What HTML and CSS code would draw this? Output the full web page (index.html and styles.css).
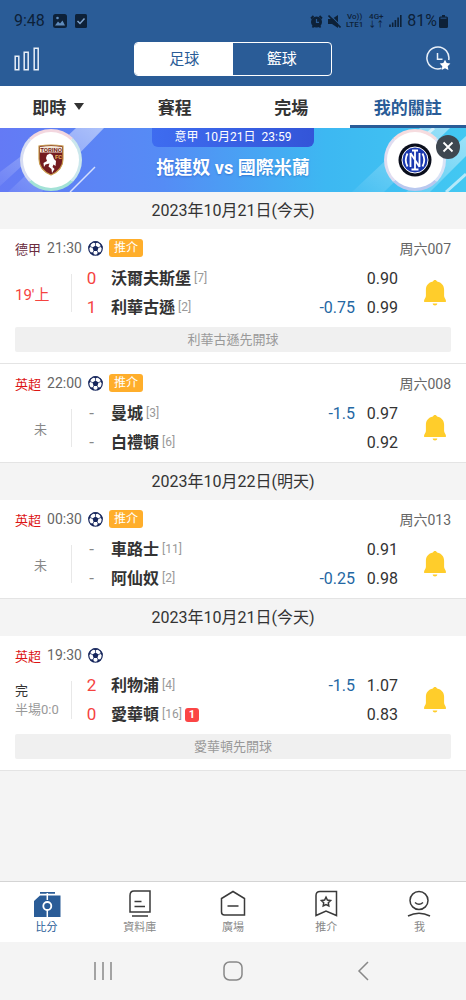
FILE: index.html
```html
<!DOCTYPE html>
<html lang="zh-Hant">
<head>
  <meta charset="UTF-8">
  <meta name="viewport" content="width=device-width, initial-scale=1">
  <title>我的關註</title>
  <link rel="stylesheet" href="styles.css">
</head>
<body>
  <!-- shared icons -->
  <svg class="defs" aria-hidden="true">
    <symbol id="ball" viewBox="0 0 16 16">
      <circle cx="8" cy="8" r="7.2" fill="#fff" stroke="#16265c" stroke-width="1.3"/>
      <path fill="#16265c" d="M8 4.700l3.200 2.300-1.200 3.700H6L4.800 7zM4.700.9L8 2.700 11.300.9 9.600.2H6.400zM.5 8.100l2.300-2.100-.5-3.300L.7 5.600zM15.500 8.100l-2.300-2.100.5-3.300 1.600 2.900zM2.200 12.300l3.500-.3.700 3.300-1.800-.3zM13.800 12.300l-3.500-.3-.7 3.300 1.800-.3z"/>
      <path stroke="#16265c" stroke-width=".8" d="M8 5V2.300M10.900 7.100l2.600-1.100M9.800 10.500l.9 1.800M6.200 10.500l-.9 1.800M5.100 7.100L2.500 6"/>
    </symbol>
    <symbol id="bell" viewBox="0 0 22 26">
      <path fill="#ffcd2b" d="M11 0c1 0 1.700.6 2.100 1.500 4.500 1 7 4 7 8.200v6.300c0 1.700 1.900 3.200 1.900 4.900 0 .8-.5 1.200-1.200 1.200H1.200C.5 22.100 0 21.700 0 20.900c0-1.700 1.900-3.200 1.900-4.900V9.700c0-4.200 2.500-7.200 7-8.200C9.300.6 10 0 11 0zM8.700 23.600h4.600c0 1.200-1 1.900-2.300 1.900s-2.300-.7-2.300-1.900z"/>
    </symbol>
  </svg>

  <header class="top">
    <div class="status-bar">
      <span class="clock">9:48</span>
      <svg width="14" height="14" viewBox="0 0 14 14"><rect width="14" height="14" rx="2.500" fill="#0d2138"/><path fill="#5f8cbd" d="M2 11.500l3-4 2 2 2.500-3L12 11.500z"/><circle cx="4.500" cy="4" r="1.300" fill="#5f8cbd"/></svg>
      <svg class="check" width="12" height="14" viewBox="0 0 12 14"><rect width="12" height="14" rx="1.500" fill="#0d2138"/><path d="M2.500 7l2.500 2.500L9.500 4.500" fill="none" stroke="#7fa3cc" stroke-width="1.500"/></svg>
      <div class="signals">
        <svg width="13" height="13" viewBox="0 0 13 13"><circle cx="6.500" cy="7" r="5.500" fill="#0d2138"/><path d="M1 3.500L3.500 1M12 3.500L9.500 1M2.500 12.500l1.500-2M10.500 12.500l-1.500-2" stroke="#0d2138" stroke-width="1.800"/><path d="M6.500 4v3.300H9" fill="none" stroke="#2a5c97" stroke-width="1.200"/></svg>
        <svg class="mute" width="13" height="13" viewBox="0 0 13 13"><path fill="#0d2138" d="M0 4h4l6-4v13L4 9H0z"/><path d="M1 -1l13 13" stroke="#2a5c97" stroke-width="1.200"/><path d="M.5 .5L12.500 12.500" stroke="#0d2138" stroke-width="1.600"/></svg>
        <span class="tiny">Vo))<br>LTE1</span>
        <span class="tiny">4G+<br>↓↑</span>
        <svg width="13" height="12" viewBox="0 0 13 12"><path stroke="#0d2138" stroke-width="1.600" d="M1 12V9.500M3.700 12V7.500M6.400 12V5M9.100 12V2.500M11.800 12V0"/></svg>
        <span class="clock">81%</span>
        <svg width="9" height="13" viewBox="0 0 9 13"><path fill="#0d2138" d="M3 0h3v1.500h1.500Q9 1.500 9 3v8.500Q9 13 7.500 13h-6Q0 13 0 11.500V3q0-1.500 1.500-1.500H3z"/><path fill="#2a5c97" d="M1.500 2.500h6v1.500h-6z" opacity=".6"/></svg>
      </div>
    </div>
    <div class="app-bar">
      <button class="icon-btn" aria-label="統計">
        <svg width="26" height="24" viewBox="0 0 26 24" fill="none" stroke="#e8eff8" stroke-width="1.500"><path d="M1.200 9.200h3.600v13.600H1.200zM10.200 5.200h4v17.600h-4zM20.200 1.200h4v21.600h-4z"/></svg>
      </button>
      <div class="segment">
        <button class="on">足球</button>
        <button>籃球</button>
      </div>
      <button class="icon-btn" aria-label="歷史">
        <svg width="26" height="26" viewBox="0 0 26 26" fill="none"><path d="M15.500 22.300A11 11 0 1 1 22.700 14" stroke="#e8eff8" stroke-width="1.500"/><path d="M11.500 7v6.300h5" stroke="#e8eff8" stroke-width="1.500"/><path fill="#fff" d="M19 13.800l1.700 3.300 3.700.5-2.700 2.600.7 3.700-3.400-1.700-3.300 1.700.6-3.700-2.600-2.600 3.600-.5z"/></svg>
      </button>
    </div>
  </header>

  <nav class="tabs">
    <a href="#">即時 <span class="caret"></span></a>
    <a href="#">賽程</a>
    <a href="#">完場</a>
    <a href="#" class="on">我的關註</a>
  </nav>

  <section class="banner">
    <svg class="streaks left" width="110" height="64" viewBox="0 0 110 64">
      <defs><linearGradient id="fade" x1="0" y1="1" x2="1" y2="0"><stop offset="0" stop-color="#fff" stop-opacity=".05"/><stop offset="1" stop-color="#fff" stop-opacity=".5"/></linearGradient></defs>
      <path fill="url(#fade)" d="M76 0h28L42 64H8zM0 44l24-18v10L0 58z"/>
      <path d="M95 39L70 64" stroke="#fff" stroke-opacity=".75" stroke-width="1.500"/>
    </svg>
    <svg class="streaks right" width="120" height="64" viewBox="0 0 120 64">
      <path fill="url(#fade)" d="M74 0h30L38 64H6zM120 8v20L84 64H60z"/>
      <path d="M120 46l-20 18M88 0L60 24" stroke="#fff" stroke-opacity=".6" stroke-width="3"/>
    </svg>
    <div class="crest home">
      <svg width="26" height="32" viewBox="0 0 26 32">
        <path fill="#741c20" stroke="#c79a4b" stroke-width="1.200" d="M1 2q12-2 24 0v13c0 8-5 13-12 16C6 28 1 23 1 15z"/>
        <path fill="#f5ead8" d="M2 3q11-2 22 0v5.500H2z"/>
        <text x="13" y="7.800" text-anchor="middle" class="crest-name">TORINO</text>
        <text x="20.500" y="14.500" text-anchor="middle" class="crest-fc">FC</text>
        <path fill="#fff" d="M9 11l3-1.500 2.500 1.500 1.500 4 2 2-.5 5-2-1.500-1 2.500 2 2-2.500 4-.5-4-3-2.500 1-3-4 1-1.500 2.500-.5-4 3.500-2-1-3z"/>
      </svg>
    </div>
    <div class="fixture">
      <p class="kickoff">意甲&nbsp; 10月21日&nbsp; 23:59</p>
      <p class="teams-title">拖連奴 vs 國際米蘭</p>
    </div>
    <div class="crest away">
      <svg width="34" height="34" viewBox="0 0 34 34">
        <circle cx="17" cy="17" r="16.500" fill="#0a0e1c"/><circle cx="17" cy="17" r="13" fill="#1a38b0" stroke="#fff" stroke-width="1"/>
        <path fill="none" stroke="#fff" stroke-width="1.800" d="M14 7.500h6M17 7.500v19M13.500 26.500h7M12.500 10v14M21.500 10v14M12.500 10l9 14M9.500 10.500q-3.500 6.500 0 13M24.500 10.500q3.500 6.500 0 13"/>
      </svg>
    </div>
    <button class="close" aria-label="關閉">
      <svg width="12" height="12" viewBox="0 0 12 12"><path d="M1.500 1.500l9 9M10.500 1.500l-9 9" stroke="#fff" stroke-width="1.800"/></svg>
    </button>
  </section>

  <main>
    <h2>2023年10月21日(今天)</h2>
    <article class="match">
      <div class="head"><span class="league bundesliga">德甲</span><time>21:30</time><svg class="ball"><use href="#ball"/></svg><span class="tag">推介</span><span class="code">周六007</span></div>
      <div class="body">
        <div class="state live">19'上</div>
        <div class="sides">
          <div class="side"><b class="score">0</b><strong>沃爾夫斯堡</strong><small>[7]</small><span class="odds">0.90</span></div>
          <div class="side"><b class="score">1</b><strong>利華古遜</strong><small>[2]</small><span class="handicap">-0.75</span><span class="odds">0.99</span></div>
        </div>
        <button class="alert" aria-label="提醒"><svg width="22" height="26"><use href="#bell"/></svg></button>
      </div>
      <p class="note">利華古遜先開球</p>
    </article>
    <article class="match">
      <div class="head"><span class="league">英超</span><time>22:00</time><svg class="ball"><use href="#ball"/></svg><span class="tag">推介</span><span class="code">周六008</span></div>
      <div class="body">
        <div class="state waiting">未</div>
        <div class="sides">
          <div class="side"><b class="score none">-</b><strong>曼城</strong><small>[3]</small><span class="handicap">-1.5</span><span class="odds">0.97</span></div>
          <div class="side"><b class="score none">-</b><strong>白禮頓</strong><small>[6]</small><span class="odds">0.92</span></div>
        </div>
        <button class="alert" aria-label="提醒"><svg width="22" height="26"><use href="#bell"/></svg></button>
      </div>
    </article>

    <h2>2023年10月22日(明天)</h2>
    <article class="match">
      <div class="head"><span class="league">英超</span><time>00:30</time><svg class="ball"><use href="#ball"/></svg><span class="tag">推介</span><span class="code">周六013</span></div>
      <div class="body">
        <div class="state waiting">未</div>
        <div class="sides">
          <div class="side"><b class="score none">-</b><strong>車路士</strong><small>[11]</small><span class="odds">0.91</span></div>
          <div class="side"><b class="score none">-</b><strong>阿仙奴</strong><small>[2]</small><span class="handicap">-0.25</span><span class="odds">0.98</span></div>
        </div>
        <button class="alert" aria-label="提醒"><svg width="22" height="26"><use href="#bell"/></svg></button>
      </div>
    </article>

    <h2>2023年10月21日(今天)</h2>
    <article class="match">
      <div class="head"><span class="league">英超</span><time>19:30</time><svg class="ball"><use href="#ball"/></svg></div>
      <div class="body">
        <div class="state done">完<span>半場0:0</span></div>
        <div class="sides">
          <div class="side"><b class="score">2</b><strong>利物浦</strong><small>[4]</small><span class="handicap">-1.5</span><span class="odds">1.07</span></div>
          <div class="side"><b class="score">0</b><strong>愛華頓</strong><small>[16]</small><i class="red-card">1</i><span class="odds">0.83</span></div>
        </div>
        <button class="alert" aria-label="提醒"><svg width="22" height="26"><use href="#bell"/></svg></button>
      </div>
      <p class="note">愛華頓先開球</p>
    </article>
  </main>

  <nav class="bottom-nav">
    <a href="#" class="on">
      <svg width="28" height="28" viewBox="0 0 28 28"><path fill="#2a5c97" d="M7 2h15v1.800H7zM7 5.500h20.500V27H1V11z"/><path d="M14.300 3v7M14.300 18.500V27" stroke="#fff" stroke-width="1.500"/><circle cx="14.300" cy="16" r="4" fill="#2a5c97" stroke="#fff" stroke-width="1.800"/></svg>
      比分
    </a>
    <a href="#">
      <svg width="28" height="28" viewBox="0 0 28 28"><path d="M8 1h16v21H4V5.500Q4 1 8 1zM8.500 11.500h7M8.500 16.500H19M6 26h16"/></svg>
      資料庫
    </a>
    <a href="#">
      <svg width="28" height="28" viewBox="0 0 28 28"><path d="M14 1.500l11.500 7V25H5.500Q2.500 25 2.500 22V8.500zM8.500 16h11"/></svg>
      廣場
    </a>
    <a href="#">
      <svg width="28" height="28" viewBox="0 0 28 28"><path d="M8 1.500h16.500V25.500L14 21 4 25.500V5.500Q4 1.500 8 1.500z"/><path d="M14 7.200l1.400 2.900 3.200.5-2.300 2.200.5 3.200-2.800-1.500-2.800 1.500.5-3.200-2.300-2.200 3.200-.5z"/></svg>
      推介
    </a>
    <a href="#">
      <svg width="28" height="28" viewBox="0 0 28 28"><circle cx="14" cy="10.500" r="9"/><path d="M10 12.500q4 3.500 8 0M3 26q11-5.500 22 0"/></svg>
      我
    </a>
  </nav>
  <div class="system-nav">
    <button aria-label="最近"><svg width="20" height="20" viewBox="0 0 20 20"><path d="M2 1v18M10 1v18M18 1v18"/></svg></button>
    <button aria-label="主頁"><svg width="20" height="20" viewBox="0 0 20 20"><rect x="1" y="1" width="18" height="18" rx="5.500"/></svg></button>
    <button aria-label="返回"><svg width="20" height="20" viewBox="0 0 20 20"><path d="M15 1L6 10l9 9"/></svg></button>
  </div>
</body>
</html>
```

FILE: styles.css
```css
* { box-sizing: border-box; }
body { margin: 0; min-height: 100vh; display: flex; flex-direction: column; background: #f4f4f4; color: #333;
       font-family: Roboto, "Noto Sans CJK TC", sans-serif; font-size: 16px; }
button { border: 0; padding: 0; background: none; font: inherit; color: inherit; cursor: pointer; }
a { color: inherit; text-decoration: none; }
p, h2 { margin: 0; font-weight: normal; }
svg { display: block; flex: none; }
.defs { position: absolute; width: 0; height: 0; }

.top { background: #2a5c97; height: 86px; color: #fff; }
.status-bar { display: flex; align-items: center; height: 42px; padding: 0 18px 0 14px; gap: 8px; color: #0d2138; }
.clock { line-height: 20px; }
.signals { display: flex; align-items: center; gap: 5px; margin-left: auto; }
.signals .clock { margin-right: -3px; }
.tiny { font-size: 8px; line-height: 8px; font-weight: 500; text-align: center; }
.app-bar { display: flex; justify-content: space-between; align-items: center; padding: 0 14px; height: 34px; }
.segment { display: flex; width: 45%; height: 34px; border: 1px solid #fff; border-radius: 4px; overflow: hidden; }
.segment button { flex: 1; line-height: 32px; font-size: 15px; }
.segment .on { background: #fff; color: #2a5c97; }

.tabs { display: flex; height: 42px; background: #fff; font-size: 17px; font-weight: 700; }
.tabs a { flex: 1; display: flex; align-items: center; justify-content: center; gap: 8px; padding-bottom: 1px; border-bottom: 3px solid transparent; border-top: 2px solid transparent; }
.tabs .on { color: #2a5c97; border-bottom-color: #2a5c97; }
.caret { border: 5px solid transparent; border-top: 7px solid #333; border-bottom: 0; }

.banner { position: relative; display: flex; justify-content: space-between; align-items: center; height: 64px; padding: 0 20px; overflow: hidden;
          background: linear-gradient(90deg, #647af5, #558cf5 35%, #3db8f2 70%, #42c8f2); color: #fff; }
.streaks { position: absolute; top: 0; }
.streaks.left { left: 0; }
.streaks.right { right: 0; }
.crest { position: relative; display: flex; align-items: center; justify-content: center; width: 62px; height: 62px; background: #fff; border: 3px solid; border-radius: 50%; }
.crest.home { border-color: #f3d7df #cbe7ec #a3e2d6 #d6dcf2; }
.crest.away { border-color: #f6dcdf #d9e3f6 #b9c8ef #e0dcf0; }
.crest-name { font-size: 6px; font-weight: 700; fill: #741c20; }
.crest-fc { font-size: 6px; font-weight: 700; fill: #e5b75a; }
.fixture { position: relative; align-self: flex-start; text-align: center; }
.kickoff { width: 162px; height: 19px; line-height: 18px; font-size: 12px; background: linear-gradient(90deg, #3e6cf0, #3355d8); border-radius: 0 0 6px 6px; }
.teams-title { line-height: 42px; font-size: 18px; font-weight: 700; white-space: nowrap; text-shadow: 0 1px 2px rgba(20,60,160,0.4); }
.close { position: absolute; top: 7px; right: 6px; width: 24px; height: 24px; border-radius: 50%; background: #3e4750; display: flex; align-items: center; justify-content: center; }

main { flex: 1; }
h2 { height: 37px; line-height: 37px; text-align: center; font-size: 16px; background: #f4f4f4; }
.match { background: #fff; padding: 9px 15px 5px; border-bottom: 1px solid #e4e4e4; }
.head { display: flex; align-items: center; gap: 6px; height: 20px; font-size: 14px; color: #666; }
.league { font-size: 13px; color: #dc1414; }
.bundesliga { color: #6b2c3e; }
.ball { width: 15px; height: 15px; }
.tag { padding: 0 5px; height: 18px; line-height: 18px; font-size: 12px; color: #fff; background: #ffae2b; border-radius: 3px; }
.code { margin-left: auto; }
.body { display: flex; align-items: center; margin-top: 6px; }
.state { width: 57px; height: 38px; display: flex; align-items: center; border-right: 1px solid #e8e8e8; font-size: 14px; }
.live { color: #f5433f; font-size: 15px; }
.waiting { justify-content: center; padding-right: 5px; font-size: 13px; color: #888; }
.done { flex-direction: column; align-items: flex-start; justify-content: center; font-size: 13px; line-height: 19px; }
.done span { color: #999; }
.sides { flex: 1; }
.side { display: flex; align-items: center; height: 29px; line-height: 29px; }
.score { width: 39px; text-align: center; font-size: 17px; font-weight: 400; color: #f5433f; }
.none { color: #888; }
.side strong { font-weight: 700; }
.side small { margin-left: 3px; font-size: 12px; color: #999; }
.handicap { margin-left: auto; color: #2467a3; }
.odds { width: 43px; text-align: right; }
.odds:not(.handicap + .odds) { margin-left: auto; }
.red-card { margin-left: 3px; width: 14px; height: 14px; line-height: 14px; font-size: 11px; font-style: normal; font-weight: 700; text-align: center; color: #fff; background: #fb4545; border-radius: 3px; }
.alert { margin: 0 5px 0 26px; }
.note { margin: 5px 0 6px; height: 25px; line-height: 25px; text-align: center; font-size: 13px; color: #999; background: #f0f0f0; border-radius: 2px; }

.bottom-nav { display: flex; height: 61px; background: #fff; border-top: 1px solid #d4d4d4; }
.bottom-nav a { flex: 1; display: flex; flex-direction: column; align-items: center; padding-top: 8px; font-size: 11px; line-height: 20px; color: #888; }
.bottom-nav a:not(.on) svg { fill: none; stroke: #3a3a3a; stroke-width: 1.5; }
.bottom-nav .on { color: #2a5c97; }
.system-nav { display: flex; height: 58px; padding: 0 8%; }
.system-nav button { flex: 1; display: flex; align-items: center; justify-content: center; }
.system-nav svg { fill: none; stroke: #888; stroke-width: 1.5; }
```
